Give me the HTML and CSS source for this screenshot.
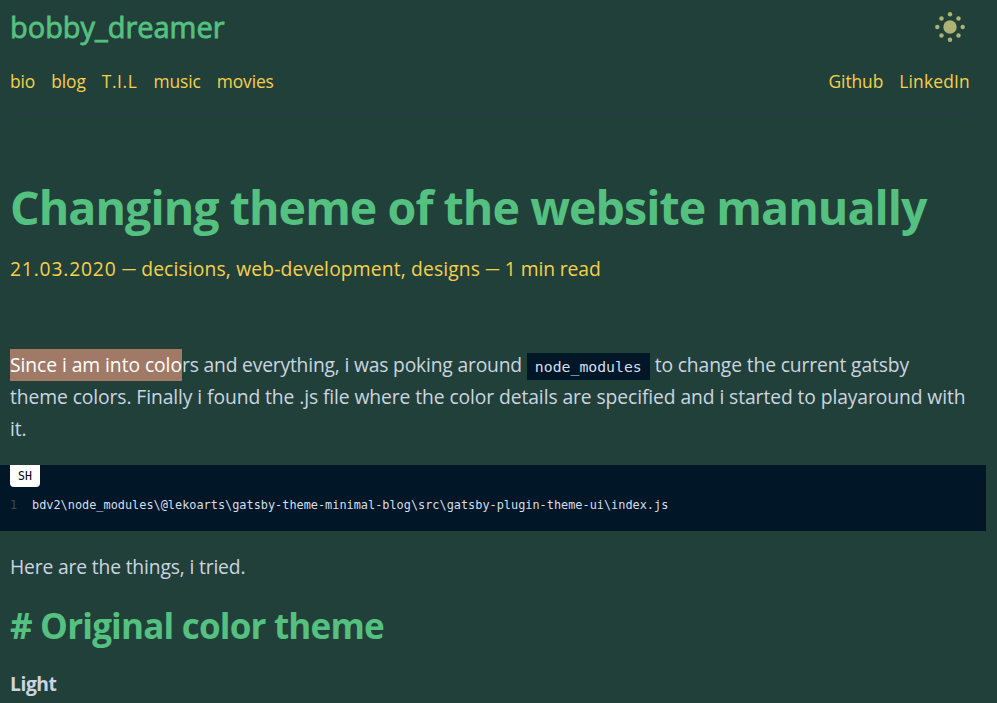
FILE: index.html
```html
<!DOCTYPE html>
<html lang="en">
<head>
<meta charset="utf-8">
<title>Changing theme of the website manually</title>
<link rel="stylesheet" href="styles.css">
</head>
<body>
<header class="header">
  <div class="top">
    <a class="brand">bobby_dreamer</a>
    <svg class="sun" viewBox="0 0 30 30" width="30" height="30" fill="#aeb375"><circle cx="15" cy="15" r="6.7"/><circle cx="15" cy="2.3" r="2.2"/><circle cx="23.5" cy="6.5" r="2.2"/><circle cx="27.7" cy="15" r="2.2"/><circle cx="23.5" cy="23.5" r="2.2"/><circle cx="15" cy="27.7" r="2.2"/><circle cx="6.5" cy="23.5" r="2.2"/><circle cx="2.3" cy="15" r="2.2"/><circle cx="6.5" cy="6.5" r="2.2"/></svg>
  </div>
  <div class="bar">
    <nav class="nav"><a>bio</a><a>blog</a><a class="til">T.I.L</a><a>music</a><a>movies</a></nav>
    <nav class="nav social"><a>Github</a><a>LinkedIn</a></nav>
  </div>
</header>
<main>
  <h1 class="title">Changing theme of the website manually</h1>
  <p class="meta"><time class="date">21.03.2020</time><span class="dash">—</span><span class="tags">decisions, web-development, designs</span><span class="dash">—</span><span class="duration">1 min read</span></p>
  <p class="text"><span class="selected">Since i am into colo</span><span class="lead">rs and everything, i was poking around</span> <code class="inline-code">node_modules</code> <span class="lead-end">to change the current gatsby</span><br>theme colors. Finally i found the .js file where the color details are specified and i started to playaround with<br>it.</p>
  <div class="code-block">
    <span class="lang">SH</span>
    <pre class="code"><span class="line-no">1</span>bdv2\node_modules\@lekoarts\gatsby-theme-minimal-blog\src\gatsby-plugin-theme-ui\index.js</pre>
  </div>
  <p class="text after">Here are the things, i tried.</p>
  <h2 class="heading"># Original color theme</h2>
  <p class="text strong">Light</p>
</main>
</body>
</html>
```
FILE: styles.css
```css
* { box-sizing: border-box; }
body { margin: 0; height: 703px; overflow: hidden; background: #22403a; color: #cbd5e0; font-family: "Open Sans", "Noto Sans", sans-serif; }
h1, h2, p, pre { margin: 0; }
.header { margin: 0 27px 0 10px; height: 113px; border-bottom: 1px solid #2d3748; }
.top { display: flex; justify-content: space-between; padding: 12px 5px 0 0; height: 61px; }
.brand { font-size: 29px; line-height: 29px; font-weight: 500; letter-spacing: -0.03px; -webkit-text-stroke: 0.8px #55c180; color: #55c180; }
.bar { display: flex; justify-content: space-between; }
.nav { display: flex; gap: 16px; font-size: 17.4px; line-height: 40px; color: #f6d04d; }
.nav a:not(.til) { letter-spacing: -0.1px; }
.nav .til { letter-spacing: 0.6px; }
.nav.social a:last-child { letter-spacing: 0.2px; }
main { padding-left: 10px; }
.title { margin-top: 64px; font-size: 46.5px; line-height: 60px; letter-spacing: -0.94px; color: #55c180; white-space: nowrap; }
.meta { display: flex; gap: 5.1px; margin-top: 16px; font-size: 19.3px; line-height: 32px; color: #f6d04d; }
.date { letter-spacing: 0.82px; }
.dash { font-size: 14.5px; }
.tags { letter-spacing: 0.14px; }
.duration { letter-spacing: -0.1px; }
.text { font-size: 19.3px; line-height: 32px; letter-spacing: -0.094px; white-space: nowrap; }
.meta + .text { margin-top: 64px; }
.selected { display: inline-block; height: 32px; letter-spacing: -0.065px; background: #a07a66; color: #fff; }
.lead { letter-spacing: -0.19px; }
.lead-end { letter-spacing: -0.13px; }
.inline-code { display: inline-block; height: 27px; padding: 0 8px; background: #011627; color: #d6deeb; font: 14.8px/27px "DejaVu Sans Mono", monospace; letter-spacing: 0; }
.code-block { margin: 20px 11px 20px -10px; height: 66px; padding-left: 10px; background: #011627; }
.lang { display: block; width: 30px; height: 22px; border-radius: 0 0 4px 4px; background: #fff; color: #000; font: 11.5px/22px "DejaVu Sans Mono", monospace; text-align: center; }
.code { font: 11.88px/20px "DejaVu Sans Mono", monospace; padding-top: 8px; color: #d6deeb; }
.line-no { display: inline-block; width: 22px; color: #3b4a58; }
.after { letter-spacing: -0.16px; }
.heading { margin-top: 19px; font-size: 35px; line-height: 48px; letter-spacing: -0.8px; color: #55c180; }
.strong { margin-top: 18px; font-weight: 700; letter-spacing: -0.45px; }
```
